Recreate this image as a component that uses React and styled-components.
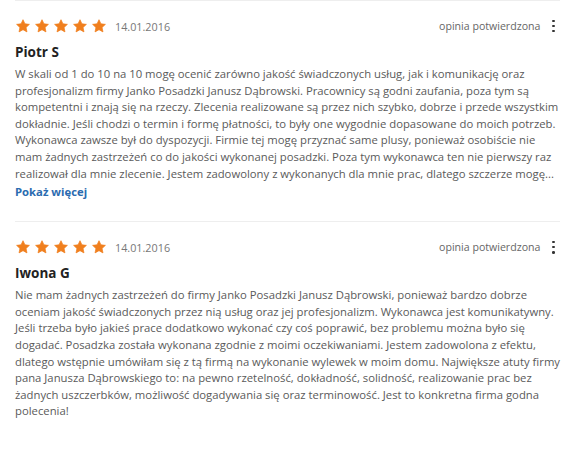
import React from "react";
import styled, { createGlobalStyle } from "styled-components";

const Global = createGlobalStyle`
  html, body { margin: 0; padding: 0; background: #fff; }
  body { font-family: "Open Sans", "Noto Sans", sans-serif; }
`;

const TopRule = styled.div`
  margin: 0 11px 0 15px;
  border-top: 1px solid #eeeeee;
`;

const Wrap = styled.div`
  padding: 0 11px 0 15px;
`;

const Review = styled.article`
  padding: 17px 0 21px;
  border-bottom: ${(p) => (p.$last ? "none" : "1px solid #eeeeee")};
`;

const Head = styled.div`
  display: flex;
  align-items: center;
  height: 16px;
`;

const Stars = styled.div`
  display: flex;
  gap: 5px;
  margin-left: 1px;
`;

const DateText = styled.span`
  margin-left: 9px;
  font-size: 10.8px;
  color: #777;
`;

const Verified = styled.span`
  margin-left: auto;
  font-size: 10.6px;
  color: #666;
`;

const Kebab = styled.div`
  display: flex;
  flex-direction: column;
  gap: 2.5px;
  margin-left: 12px;
  margin-right: 5px;
  span {
    width: 2.6px;
    height: 2.6px;
    border-radius: 50%;
    background: #333;
  }
`;

const Name = styled.h3`
  margin: 9px 0 0;
  font-size: 13.5px;
  font-weight: 700;
  color: #222;
  line-height: 18px;
`;

const Body = styled.p`
  margin: 5px 0 0;
  font-size: 11.3px;
  line-height: 16.6px;
  color: #5a5a5a;
  white-space: nowrap;
`;

const More = styled.a`
  display: block;
  margin-top: 1px;
  font-size: 11.3px;
  font-weight: 700;
  color: #2b6cb0;
  line-height: 17px;
  text-decoration: none;
`;

const Star = () => (
  <svg width="14" height="14" viewBox="0 0 24 24">
    <path
      fill="#f07f1e"
      stroke="#f07f1e"
      strokeWidth="1.2"
      strokeLinejoin="round"
      d="M12 1.2l3.3 7.1 7.7.9-5.7 5.3 1.5 7.6L12 18.3l-6.8 3.8 1.5-7.6L1 9.2l7.7-.9z"
    />
  </svg>
);

const reviews = [
  {
    name: "Piotr S",
    date: "14.01.2016",
    lines: [
      "W skali od 1 do 10 na 10 mogę ocenić zarówno jakość świadczonych usług, jak i komunikację oraz",
      "profesjonalizm firmy Janko Posadzki Janusz Dąbrowski. Pracownicy są godni zaufania, poza tym są",
      "kompetentni i znają się na rzeczy. Zlecenia realizowane są przez nich szybko, dobrze i przede wszystkim",
      "dokładnie. Jeśli chodzi o termin i formę płatności, to były one wygodnie dopasowane do moich potrzeb.",
      "Wykonawca zawsze był do dyspozycji. Firmie tej mogę przyznać same plusy, ponieważ osobiście nie",
      "mam żadnych zastrzeżeń co do jakości wykonanej posadzki. Poza tym wykonawca ten nie pierwszy raz",
      "realizował dla mnie zlecenie. Jestem zadowolony z wykonanych dla mnie prac, dlatego szczerze mogę...",
    ],
    more: true,
  },
  {
    name: "Iwona G",
    date: "14.01.2016",
    lines: [
      "Nie mam żadnych zastrzeżeń do firmy Janko Posadzki Janusz Dąbrowski, ponieważ bardzo dobrze",
      "oceniam jakość świadczonych przez nią usług oraz jej profesjonalizm. Wykonawca jest komunikatywny.",
      "Jeśli trzeba było jakieś prace dodatkowo wykonać czy coś poprawić, bez problemu można było się",
      "dogadać. Posadzka została wykonana zgodnie z moimi oczekiwaniami. Jestem zadowolona z efektu,",
      "dlatego wstępnie umówiłam się z tą firmą na wykonanie wylewek w moim domu. Największe atuty firmy",
      "pana Janusza Dąbrowskiego to: na pewno rzetelność, dokładność, solidność, realizowanie prac bez",
      "żadnych uszczerbków, możliwość dogadywania się oraz terminowość. Jest to konkretna firma godna",
      "polecenia!",
    ],
    more: false,
  },
];

export default function App() {
  return (
    <>
      <Global />
      <TopRule />
      <Wrap>
        {reviews.map((r, i) => (
          <Review key={i} $last={i === reviews.length - 1}>
            <Head>
              <Stars>
                {[0, 1, 2, 3, 4].map((k) => (
                  <Star key={k} />
                ))}
              </Stars>
              <DateText>{r.date}</DateText>
              <Verified>opinia potwierdzona</Verified>
              <Kebab>
                <span />
                <span />
                <span />
              </Kebab>
            </Head>
            <Name>{r.name}</Name>
            <Body>
              {r.lines.map((l, k) => (
                <React.Fragment key={k}>
                  {l}
                  {k < r.lines.length - 1 && <br />}
                </React.Fragment>
              ))}
            </Body>
            {r.more && <More href="#">Pokaż więcej</More>}
          </Review>
        ))}
      </Wrap>
    </>
  );
}
